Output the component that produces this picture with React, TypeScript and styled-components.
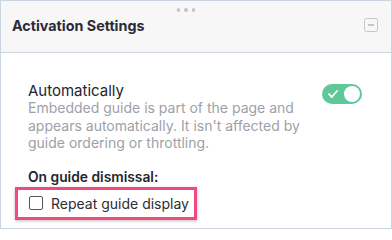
import React from "react"
import styled, { createGlobalStyle } from "styled-components"

const GlobalStyle = createGlobalStyle`
  html, body {
    margin: 0;
    padding: 0;
    background: #ffffff;
  }
  body {
    font-family: Inter, "Noto Sans", "Liberation Sans", sans-serif;
    -webkit-font-smoothing: antialiased;
  }
`

const Panel = styled.section`
  box-sizing: border-box;
  width: 392px;
  height: 229px;
  border: 1px solid #cbd5e0;
  background: #ffffff;
  display: flex;
  flex-direction: column;
`

const Header = styled.header`
  background: #f7f7f8;
  border-bottom: 1px solid #cbd5e0;
  padding: 7px 13px 16px 11px;
  display: flex;
  flex-direction: column;
`

const DragHandle = styled.div`
  display: flex;
  justify-content: center;
  gap: 4px;
  padding-right: 18px;
`

const Dot = styled.span`
  width: 3.5px;
  height: 3.5px;
  border-radius: 50%;
  background: #c4c4cb;
`

const TitleRow = styled.div`
  display: flex;
  align-items: center;
  justify-content: space-between;
  margin-top: 3px;
  height: 21px;
`

const Title = styled.h2`
  margin: 0;
  font-size: 14.3px;
  font-weight: 700;
  color: #2b2b36;
`

const CollapseButton = styled.button`
  box-sizing: border-box;
  width: 14px;
  height: 14px;
  padding: 0;
  border: 1.5px solid #c6c6cc;
  border-radius: 2.5px;
  background: transparent;
  display: flex;
  align-items: center;
  justify-content: center;
  &::after {
    content: "";
    width: 6px;
    height: 1.5px;
    background: #c6c6cc;
  }
`

const Body = styled.div`
  padding: 29px 29px 0 27px;
  display: flex;
  flex-direction: column;
`

const OptionRow = styled.div`
  display: flex;
  align-items: flex-start;
  justify-content: space-between;
  gap: 10px;
`

const OptionText = styled.div`
  display: flex;
  flex-direction: column;
`

const OptionTitle = styled.div`
  font-size: 15px;
  line-height: 17.5px;
  color: #25252d;
`

const OptionDescription = styled.p`
  margin: 0;
  font-size: 14px;
  line-height: 17.5px;
  color: #9e9fa8;
  width: 282px;
`

const Toggle = styled.div<{ $on: boolean }>`
  flex: none;
  width: 40px;
  height: 20px;
  margin-top: 2px;
  border-radius: 10px;
  background: ${(p) => (p.$on ? "#5fc898" : "#d5d5db")};
  display: flex;
  align-items: center;
  justify-content: space-between;
  padding: 0 2px 0 6px;
  box-sizing: border-box;
`

const Knob = styled.span`
  width: 16px;
  height: 16px;
  border-radius: 50%;
  background: #ffffff;
`

const SectionLabel = styled.div`
  margin-top: 17px;
  font-size: 13.8px;
  font-weight: 600;
  color: #25252d;
`

const Highlight = styled.label`
  align-self: flex-start;
  margin: 2px 0 0 -13px;
  box-sizing: border-box;
  height: 33px;
  border: 3px solid #f2497c;
  box-shadow: 0 1px 3px rgba(0, 0, 0, 0.25);
  display: flex;
  align-items: center;
  gap: 8px;
  padding: 0 5px 0 11px;
  font-size: 14px;
  color: #2d2d33;
`

const CheckBox = styled.span`
  box-sizing: border-box;
  width: 14px;
  height: 14px;
  border: 1px solid #55555c;
  border-radius: 2px;
  background: #ffffff;
`

export default function App() {
  return (
    <>
      <GlobalStyle />
      <Panel>
        <Header>
          <DragHandle>
            <Dot />
            <Dot />
            <Dot />
          </DragHandle>
          <TitleRow>
            <Title>Activation Settings</Title>
            <CollapseButton aria-label="Collapse" />
          </TitleRow>
        </Header>
        <Body>
          <OptionRow>
            <OptionText>
              <OptionTitle>Automatically</OptionTitle>
              <OptionDescription>
                Embedded guide is part of the page and appears automatically.
                It isn't affected by guide ordering or throttling.
              </OptionDescription>
            </OptionText>
            <Toggle $on>
              <svg width="10" height="8" viewBox="0 0 10 8">
                <path
                  d="M1 4.2 L3.8 7 L9 1"
                  fill="none"
                  stroke="#ffffff"
                  strokeWidth="1.8"
                  strokeLinecap="round"
                  strokeLinejoin="round"
                />
              </svg>
              <Knob />
            </Toggle>
          </OptionRow>
          <SectionLabel>On guide dismissal:</SectionLabel>
          <Highlight>
            <CheckBox />
            Repeat guide display
          </Highlight>
        </Body>
      </Panel>
    </>
  )
}
